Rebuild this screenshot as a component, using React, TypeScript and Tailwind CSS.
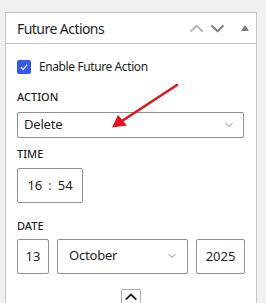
import { ChevronDown } from "lucide-react";

function Chevron({ up, className }: { up?: boolean; className?: string }) {
  return (
    <svg width="15" height="9" viewBox="0 0 15 9" fill="none" className={className}>
      <path
        d={up ? "M1.5 7.5 L7.5 1.8 L13.5 7.5" : "M1.5 1.5 L7.5 7.2 L13.5 1.5"}
        stroke="currentColor"
        strokeWidth="2"
      />
    </svg>
  );
}

export default function App() {
  return (
    <div className="relative h-[303px] w-[266px] overflow-hidden bg-[#f0f0f1] pl-[5px] pt-[12px] font-['Noto_Sans',sans-serif] text-[#1e1e1e]">
      <div className="h-[320px] w-[252px] border border-[#c3c4c7] bg-white">
        {/* Header */}
        <div className="flex h-[31px] items-center border-b border-[#c3c4c7] pl-[11px] pr-[6px]">
          <h2 className="flex-1 text-[14px] font-normal tracking-[-0.55px]">Future Actions</h2>
          <div className="flex items-center gap-[6px]">
            <Chevron up className="text-[#b4b7ba]" />
            <Chevron className="text-[#787c82]" />
            <span className="ml-[10px] mr-[1px] inline-block h-0 w-0 border-x-[4px] border-b-[6px] border-x-transparent border-b-[#787c82]" />
          </div>
        </div>

        {/* Body */}
        <div className="px-[11px] pt-[14px]">
          <label className="flex items-center gap-[8px]">
            <span className="flex h-[14px] w-[14px] items-center justify-center rounded-[2px] bg-[#3858e9]">
              <svg width="10" height="10" viewBox="0 0 10 10" fill="none">
                <path d="M2 5.2 L4.2 7.4 L8.2 2.6" stroke="white" strokeWidth="1.3" />
              </svg>
            </span>
            <span className="text-[12px] tracking-[-0.4px]">Enable Future Action</span>
          </label>

          <div className="mt-[13px] text-[11px] font-medium uppercase leading-[16px]">Action</div>
          <div className="mt-[7px] flex h-[26px] w-[227px] items-center justify-between rounded-[2px] border border-[#8c8f94] pl-[6px] pr-[8px] text-[13px] tracking-[-0.2px]">
            <span>Delete</span>
            <ChevronDown size={12} strokeWidth={1.5} className="text-[#50575e]" />
          </div>

          <div className="mt-[8px] text-[11px] font-medium uppercase leading-[16px]">Time</div>
          <div className="mt-[6px] flex h-[35px] w-[66px] items-center justify-center gap-[6px] rounded-[2px] border border-[#8c8f94] text-[13px]">
            <span>16</span>
            <span className="text-[#50575e]">:</span>
            <span>54</span>
          </div>

          <div className="mt-[15px] text-[11px] font-medium uppercase leading-[16px]">Date</div>
          <div className="mt-[5px] flex h-[35px] items-stretch gap-[8px] text-[13px]">
            <div className="flex w-[32px] items-center justify-center rounded-[2px] border border-[#8c8f94]">13</div>
            <div className="flex w-[131px] items-center justify-between rounded-[2px] border border-[#8c8f94] pb-[2px] pl-[11px] pr-[9px] tracking-[-0.2px]">
              <span>October</span>
              <ChevronDown size={12} strokeWidth={1.5} className="text-[#50575e]" />
            </div>
            <div className="flex w-[49px] items-center justify-center rounded-[2px] border border-[#8c8f94]">2025</div>
          </div>

          <div className="mt-[15px] flex justify-center">
            <div className="flex h-[22px] w-[20px] items-start justify-center rounded-[2px] border border-[#a7aaad] pt-[3px]">
              <Chevron up className="h-[8px] w-[14px] text-[#1e1e1e]" />
            </div>
          </div>
        </div>
      </div>

      {/* Red annotation arrow */}
      <svg className="absolute left-0 top-0" width="266" height="303" viewBox="0 0 266 303" fill="none">
        <line x1="177" y1="85" x2="122" y2="121" stroke="#e3131b" strokeWidth="2.6" strokeLinecap="round" />
        <path d="M112 127.5 L118 115 L127 125.5 Z" fill="#e3131b" />
      </svg>
    </div>
  );
}
